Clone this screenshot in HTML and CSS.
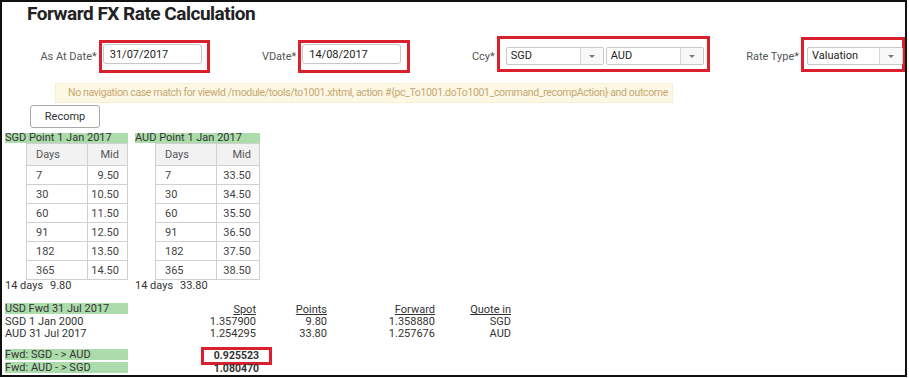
FILE: index.html
```html
<!DOCTYPE html>
<html lang="en">
  <head>
    <meta charset="UTF-8" />
    <meta name="viewport" content="width=device-width, initial-scale=1.0" />
    <title>Forward FX Rate Calculation</title>
    <link rel="stylesheet" href="styles.css">
  </head>
  <body>
    <div class="frame">
      <h1 class="title">Forward FX Rate Calculation</h1>

      <div class="form-row">
        <label class="lbl lbl-date">As At Date*</label>
        <div class="mark mark-date"><input class="text-in" type="text" value="31/07/2017" /></div>

        <label class="lbl lbl-vdate">VDate*</label>
        <div class="mark mark-date"><input class="text-in" type="text" value="14/08/2017" /></div>

        <label class="lbl lbl-ccy">Ccy*</label>
        <div class="mark mark-ccy">
          <div class="select sel-ccy"><span class="sel-text">SGD</span><span class="sel-arrow"></span></div>
          <div class="select sel-ccy"><span class="sel-text">AUD</span><span class="sel-arrow"></span></div>
        </div>

        <label class="lbl lbl-rate">Rate Type*</label>
        <div class="mark mark-rate">
          <div class="select sel-rate"><span class="sel-text">Valuation</span><span class="sel-arrow"></span></div>
        </div>
      </div>

      <div class="msg">No navigation case match for viewId /module/tools/to1001.xhtml, action #{pc_To1001.doTo1001_command_recompAction} and outcome</div>

      <button type="button" class="btn">Recomp</button>

      <div class="points">
        <div class="point-block">
          <div class="bar">SGD Point 1 Jan 2017</div>
          <table class="grid">
            <tr><th class="c-days">Days</th><th class="c-mid">Mid</th></tr>
            <tr><td class="c-days">7</td><td class="c-mid">9.50</td></tr>
            <tr><td class="c-days">30</td><td class="c-mid">10.50</td></tr>
            <tr><td class="c-days">60</td><td class="c-mid">11.50</td></tr>
            <tr><td class="c-days">91</td><td class="c-mid">12.50</td></tr>
            <tr><td class="c-days">182</td><td class="c-mid">13.50</td></tr>
            <tr><td class="c-days">365</td><td class="c-mid">14.50</td></tr>
          </table>
          <div class="interp"><span class="interp-lbl">14 days</span><span>9.80</span></div>
        </div>

        <div class="point-block">
          <div class="bar">AUD Point 1 Jan 2017</div>
          <table class="grid">
            <tr><th class="c-days">Days</th><th class="c-mid">Mid</th></tr>
            <tr><td class="c-days">7</td><td class="c-mid">33.50</td></tr>
            <tr><td class="c-days">30</td><td class="c-mid">34.50</td></tr>
            <tr><td class="c-days">60</td><td class="c-mid">35.50</td></tr>
            <tr><td class="c-days">91</td><td class="c-mid">36.50</td></tr>
            <tr><td class="c-days">182</td><td class="c-mid">37.50</td></tr>
            <tr><td class="c-days">365</td><td class="c-mid">38.50</td></tr>
          </table>
          <div class="interp"><span class="interp-lbl">14 days</span><span>33.80</span></div>
        </div>
      </div>

      <table class="fwd">
        <tr class="fwd-head">
          <td class="f-name"><div class="bar">USD Fwd 31 Jul 2017</div></td>
          <td class="f-spot"><u>Spot</u></td>
          <td class="f-points"><u>Points</u></td>
          <td class="f-forward"><u>Forward</u></td>
          <td class="f-quote"><u>Quote in</u></td>
        </tr>
        <tr class="fwd-row">
          <td class="f-name">SGD 1 Jan 2000</td>
          <td class="f-spot">1.357900</td>
          <td class="f-points">9.80</td>
          <td class="f-forward">1.358880</td>
          <td class="f-quote">SGD</td>
        </tr>
        <tr class="fwd-row">
          <td class="f-name">AUD 31 Jul 2017</td>
          <td class="f-spot">1.254295</td>
          <td class="f-points">33.80</td>
          <td class="f-forward">1.257676</td>
          <td class="f-quote">AUD</td>
        </tr>
        <tr class="cross-row first-cross">
          <td class="f-name"><div class="bar">Fwd: SGD - &gt; AUD</div></td>
          <td class="f-cross"><span class="marked">0.925523</span></td>
          <td colspan="3"></td>
        </tr>
        <tr class="cross-row">
          <td class="f-name"><div class="bar">Fwd: AUD - &gt; SGD</div></td>
          <td class="f-cross"><span>1.080470</span></td>
          <td colspan="3"></td>
        </tr>
      </table>
    </div>
  </body>
</html>
```

FILE: styles.css
```css
body {
  margin: 0;
  padding: 0;
  font-family: Roboto, "Liberation Sans", sans-serif;
  font-size: 11px;
  color: #333;
  background: #fff;
}

.frame {
  width: 907px;
  height: 377px;
  box-sizing: border-box;
  border: 2px solid #111;
  overflow: hidden;
}

.title {
  margin: 0;
  padding: 1px 0 0 25px;
  font-size: 19px;
  line-height: 22px;
  font-weight: bold;
  color: #222;
  letter-spacing: -0.5px;
}

/* form line */
.form-row {
  display: flex;
  align-items: flex-start;
  height: 45px;
  margin-top: 13px;
}

.lbl {
  text-align: right;
  color: #555;
  font-size: 11px;
  line-height: 14px;
  padding-top: 12px;
  padding-right: 2px;
  box-sizing: border-box;
}

.lbl-date { width: 97px; }
.lbl-vdate { width: 88px; }
.lbl-ccy { width: 87px; }
.lbl-rate { width: 91px; }

.mark {
  border: 3px solid #d9202c;
  box-sizing: border-box;
}

.mark-date {
  width: 112px;
  height: 33px;
  margin-top: 2px;
  padding: 1px 0 0 1px;
}

.mark-ccy {
  width: 214px;
  height: 36px;
  margin-top: -2px;
  display: flex;
  gap: 2px;
  padding: 8px 0 0 6px;
}

.mark-rate {
  width: 104px;
  height: 35px;
  margin-top: -1px;
  padding: 7px 0 0 3px;
}

.text-in {
  display: block;
  width: 99px;
  height: 20px;
  box-sizing: border-box;
  margin: 0;
  border: 1px solid #c8c8c8;
  border-radius: 3px;
  padding: 0 6px;
  font-family: Roboto, "Liberation Sans", sans-serif;
  font-size: 11px;
  color: #222;
  outline: none;
}

.select {
  display: flex;
  height: 18px;
  box-sizing: border-box;
  border: 1px solid #c8c8c8;
  border-radius: 2px;
  background: #fff;
}

.sel-ccy { width: 98px; }
.sel-rate { width: 96px; }

.sel-text {
  flex: 1;
  padding-left: 4px;
  font-size: 11px;
  line-height: 16px;
  color: #222;
}

.sel-arrow {
  width: 22px;
  border-left: 1px solid #d6d6d6;
  background: #f8f8f8;
  position: relative;
}

.sel-arrow::after {
  content: "";
  position: absolute;
  left: 8px;
  top: 7px;
  border-left: 3px solid transparent;
  border-right: 3px solid transparent;
  border-top: 3px solid #6c7b8b;
}

/* message */
.msg {
  margin-left: 53px;
  width: 618px;
  height: 20px;
  box-sizing: border-box;
  background: #fcf8e3;
  border: 1px solid #f6efd5;
  padding-left: 12px;
  line-height: 18px;
  font-size: 10.5px;
  color: #c6a774;
  white-space: nowrap;
  overflow: hidden;
  letter-spacing: -0.35px;
}

.btn {
  display: block;
  margin: 2px 0 0 28px;
  width: 70px;
  height: 23px;
  background: #fff;
  border: 1px solid #a9a9a9;
  border-radius: 3px;
  font-family: Roboto, "Liberation Sans", sans-serif;
  font-size: 11px;
  color: #333;
  padding: 0;
}

/* point tables */
.points {
  display: flex;
  margin-top: 5px;
  margin-left: 3px;
  gap: 7px;
}

.point-block {
  width: 123px;
}

.point-block + .point-block {
  width: 125px;
}

.point-block + .point-block .grid {
  margin-left: 20px;
  width: 105px;
}

.bar {
  background: #acdcac;
  height: 10px;
  line-height: 10px;
  font-size: 11px;
  color: #333;
  white-space: nowrap;
}

.grid {
  border-collapse: collapse;
  margin-left: 21px;
  width: 102px;
}

.grid th,
.grid td {
  border: 1px solid #d0d0d0;
  font-weight: normal;
  font-size: 11px;
  color: #444;
  height: 18px;
  padding: 0;
}

.grid th {
  background: #f2f2f2;
  height: 21px;
  color: #555;
}

.c-days {
  width: 51px;
  text-align: left;
  padding-left: 9px !important;
}

.c-mid {
  text-align: right;
  padding-right: 8px !important;
}

.interp {
  display: flex;
  line-height: 12px;
  color: #333;
}

.interp-lbl {
  width: 45px;
}

/* forward summary */
.fwd {
  border-collapse: collapse;
  margin: 11px 0 0 3px;
}

.fwd td {
  padding: 0;
  font-size: 11px;
  color: #333;
  white-space: nowrap;
}

.f-name { width: 123px; }
.f-spot { width: 128px; text-align: right; }
.f-points { width: 71px; text-align: right; }
.f-forward { width: 108px; text-align: right; }
.f-quote { width: 76px; text-align: right; }

.fwd-head td {
  height: 13px;
  vertical-align: top;
}

.fwd-head .bar {
  height: 11px;
  line-height: 11px;
}

.fwd-row td {
  height: 12px;
  line-height: 12px;
}

.fwd-row .f-name {
  vertical-align: top;
}

.fwd-row td:not(.f-name) {
  vertical-align: bottom;
}

.first-cross td {
  padding-top: 9px;
}

.cross-row td {
  height: 11px;
  line-height: 11px;
}

.cross-row .bar {
  height: 11px;
  line-height: 11px;
  margin-bottom: 2px;
}

.f-cross {
  text-align: right;
  font-weight: bold;
}

.f-cross span {
  display: inline-block;
  margin-right: -3px;
  position: relative;
  font-size: 10.5px;
}

.marked::after {
  content: "";
  position: absolute;
  left: -13px;
  right: -13px;
  top: -3px;
  bottom: -4px;
  border: 3px solid #d9202c;
}
```
